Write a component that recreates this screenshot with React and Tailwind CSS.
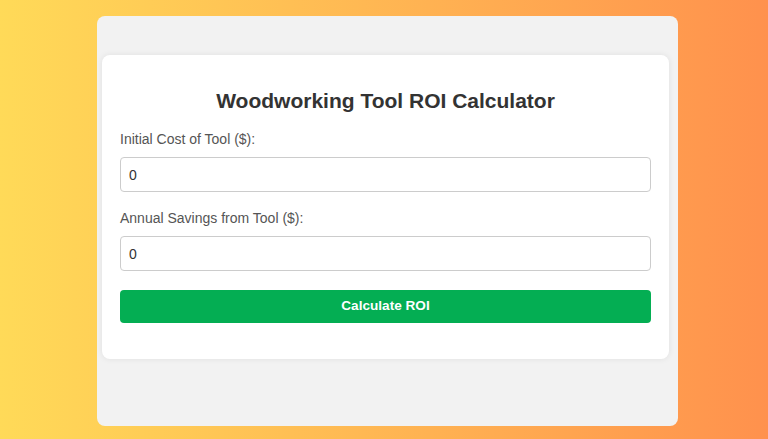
import React, { useState } from 'react';

function Field({ label, value, onChange }) {
  return (
    <div className="flex flex-col">
      <label className="text-[14px] leading-[16px] text-[#555]">{label}</label>
      <input
        type="number"
        value={value}
        onChange={(e) => onChange(e.target.value)}
        className="mt-[10px] h-[35px] w-full rounded-[4px] border border-[#ccc] bg-white px-[8px] text-[14px] text-[#333] outline-none"
      />
    </div>
  );
}

export default function App() {
  const [cost, setCost] = useState('0');
  const [savings, setSavings] = useState('0');

  return (
    <div
      className="flex h-[439px] w-full justify-center bg-gradient-to-r from-[#ffda58] to-[#ff914d] pl-[7px] pt-[16px]"
      style={{ fontFamily: '"Liberation Sans", Arial, sans-serif' }}
    >
      <div className="h-[410px] w-[581px] rounded-[8px] bg-[#f2f2f2] pl-[5px] pr-[9px] pt-[39px]">
        <div className="rounded-[8px] bg-white px-[18px] pb-[36px] pt-[34px] shadow-[0_0_6px_rgba(0,0,0,0.08)]">
          <h1 className="text-center text-[21px] font-bold leading-[24px] text-[#333]">
            Woodworking Tool ROI Calculator
          </h1>
          <div className="mt-[18px] flex flex-col gap-[18px]">
            <Field label="Initial Cost of Tool ($):" value={cost} onChange={setCost} />
            <Field label="Annual Savings from Tool ($):" value={savings} onChange={setSavings} />
          </div>
          <button className="mt-[19px] h-[33px] w-full rounded-[4px] bg-[#04ae53] text-[13.6px] font-bold text-white">
            Calculate ROI
          </button>
        </div>
      </div>
    </div>
  );
}
